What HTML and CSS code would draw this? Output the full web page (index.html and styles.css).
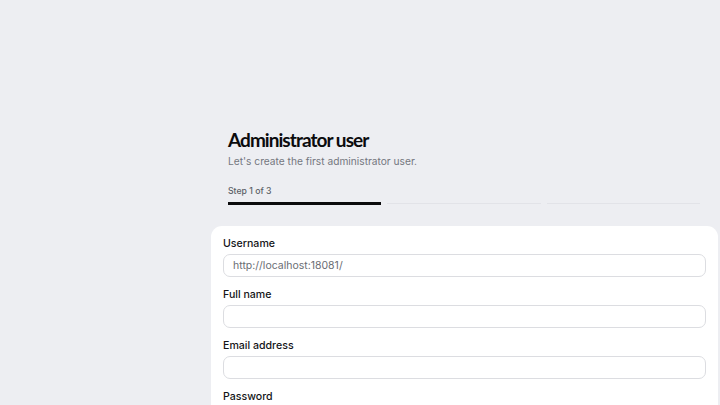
FILE: index.html
```html
<!DOCTYPE html>
<html>
<head>
<meta charset="utf-8">
<link rel="stylesheet" href="styles.css">
</head>
<body>
<div class="page">
  <div class="wrap">
    <header class="head">
      <h1 class="title">Administrator user</h1>
      <p class="subtitle">Let's create the first administrator user.</p>
      <div class="step">Step 1 of 3</div>
      <div class="progress">
        <span class="seg active"></span>
        <span class="seg"></span>
        <span class="seg"></span>
      </div>
    </header>
    <form class="card">
      <label class="field">
        <span class="label">Username</span>
        <input class="input" type="text" value="http://localhost:18081/">
      </label>
      <label class="field">
        <span class="label">Full name</span>
        <input class="input" type="text">
      </label>
      <label class="field">
        <span class="label">Email address</span>
        <input class="input" type="text">
      </label>
      <label class="field">
        <span class="label">Password</span>
        <input class="input" type="password">
      </label>
    </form>
  </div>
</div>
</body>
</html>
```
FILE: styles.css
```css
html, body {
  margin: 0;
  padding: 0;
  background: #edeef2;
  font-family: Inter, "Noto Sans", sans-serif;
  color: #111;
  overflow: hidden;
}
.page {
  display: flex;
  padding-left: 211px;
  padding-top: 126px;
  padding-right: 2px;
}
.wrap {
  flex: 1;
  display: flex;
  flex-direction: column;
}
.head {
  padding: 0 18px 0 17px;
}
.title {
  margin: 0;
  font-family: Lato, Inter, sans-serif;
  font-size: 19px;
  font-weight: 700;
  letter-spacing: -0.95px;
  line-height: 28px;
  color: #0b0b0d;
}
.subtitle {
  margin: 0;
  font-size: 10.2px;
  line-height: 14px;
  color: #74777f;
}
.step {
  margin-top: 17px;
  font-size: 8.7px;
  font-weight: 500;
  color: #5b5e66;
  line-height: 12px;
}
.progress {
  margin-top: 5px;
  display: flex;
  gap: 6px;
  align-items: center;
}
.seg {
  flex: 1;
  height: 1px;
  background: #e2e3e8;
}
.seg.active {
  height: 3px;
  background: #0b0b0d;
}
.card {
  margin-top: 21px;
  background: #fff;
  border-radius: 11px;
  padding: 11px 12px 20px 12px;
  display: flex;
  flex-direction: column;
  gap: 11px;
}
.field {
  display: flex;
  flex-direction: column;
  gap: 4px;
}
.label {
  font-size: 10.6px;
  font-weight: 500;
  line-height: 13px;
  color: #141518;
}
.input {
  box-sizing: border-box;
  height: 23px;
  border: 1px solid #dcdde1;
  border-radius: 7px;
  padding: 0 9px;
  font-family: Inter, "Noto Sans", sans-serif;
  font-size: 10.5px;
  color: #6a6d74;
  background: #fff;
  outline: none;
}
```
